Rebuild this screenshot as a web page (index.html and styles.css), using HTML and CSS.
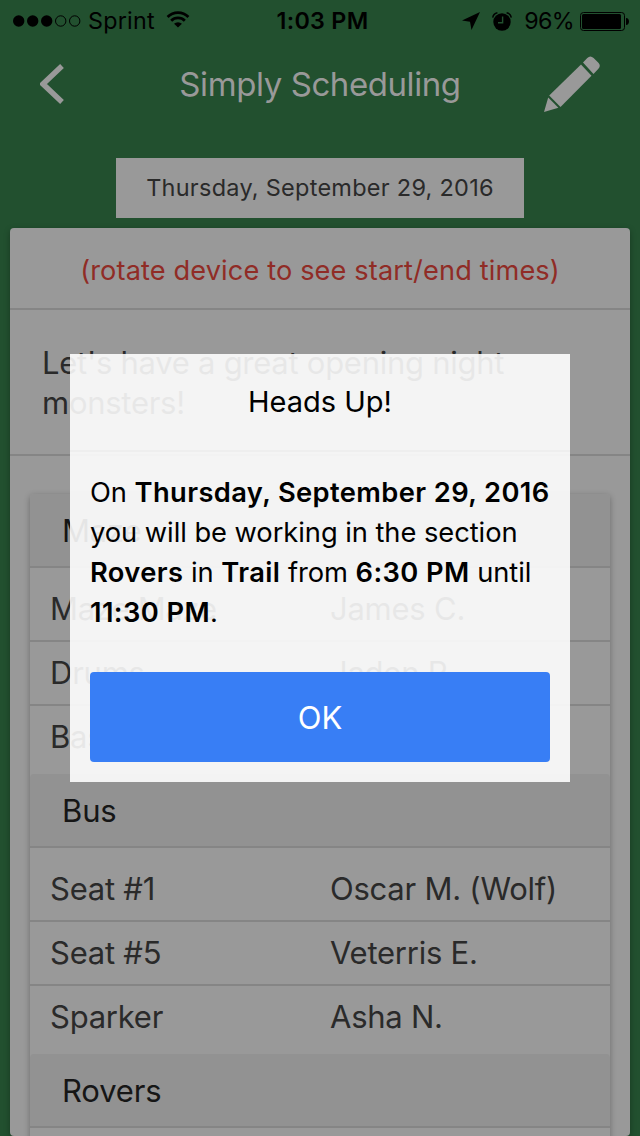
FILE: index.html
```html
<!DOCTYPE html>
<html lang="en">
<head>
<meta charset="utf-8">
<title>Simply Scheduling</title>
<link rel="stylesheet" href="styles.css">
</head>
<body>
<div class="screen">
  <div class="status">
    <div class="status-left">
      <svg class="signal" width="68" height="12" viewBox="0 0 68 12"><g><circle cx="5.7" cy="6" r="5.7"/><circle cx="19.7" cy="6" r="5.7"/><circle cx="33.7" cy="6" r="5.7"/></g><g fill="none" stroke="#000" stroke-width="1"><circle cx="47.7" cy="6" r="5.2"/><circle cx="61.7" cy="6" r="5.2"/></g></svg>
      <span class="carrier">Sprint</span>
      <svg class="wifi" width="24" height="19" viewBox="0 0 26 19"><g fill="none" stroke="#000" stroke-width="3"><path d="M1.7 6.8a16 16 0 0 1 22.6 0"/><path d="M5.6 10.9a10.5 10.5 0 0 1 14.8 0"/></g><path d="M13 18.3l-4.3-4.2a6.2 6.2 0 0 1 8.6 0z"/></svg>
    </div>
    <span class="clock">1:03 PM</span>
    <div class="status-right">
      <svg width="18" height="18" viewBox="0 0 18 18"><path d="M18 0L9.5 18 8 9.8 0 8.4z"/></svg>
      <svg class="alarm" width="20" height="19" viewBox="0 0 20 19"><circle cx="10" cy="10" r="8.7"/><path d="M.7 5.6A6 6 0 0 1 5.4.8M19.3 5.6A6 6 0 0 0 14.6.8" fill="none" stroke="#000" stroke-width="1.4"/><path d="M10.6 4.6v6.2H6" fill="none" stroke="#22502f" stroke-width="1.4"/></svg>
      <span class="percent">96%</span>
      <svg width="49" height="19" viewBox="0 0 49 19"><rect x=".5" y=".5" width="44" height="18" rx="3" fill="none" stroke="#000"/><rect x="2" y="2" width="39" height="15" rx="1.5"/><path d="M46 6c4 0 4 7 0 7z"/></svg>
    </div>
  </div>
  <header class="navbar">
    <svg class="back" width="24" height="40" viewBox="0 0 24 40"><path d="M22 2L3 20l19 18" fill="none" stroke="#999" stroke-width="5.4"/></svg>
    <h1 class="title">Simply Scheduling</h1>
    <svg class="pencil" width="56" height="56" viewBox="0 0 56 56" fill="#999"><path d="M39 6.5L43.3 2q3-3.2 6.3 0l4.8 4.8q2.8 3 0 6L49.5 18z"/><path d="M37 8.5l10.5 11.3L16.5 51 5.2 39.6z"/><path d="M4.2 41.6l10.2 10.2L0 56z"/></svg>
  </header>
  <div class="date">Thursday, September 29, 2016</div>
  <main class="card">
    <div class="hint">(rotate device to see start/end times)</div>
    <div class="note">Let's have a great opening night<br>monsters!</div>
    <div class="list-wrap">
      <div class="list">
        <h2 class="section">Maze</h2>
        <div class="row first"><span>Maze Maze</span><span>James C.</span></div>
        <div class="row"><span>Drums</span><span>Jaden R.</span></div>
        <div class="row last"><span>Bass</span><span></span></div>
        <h2 class="section">Bus</h2>
        <div class="row first"><span>Seat #1</span><span>Oscar M. (Wolf)</span></div>
        <div class="row"><span>Seat #5</span><span>Veterris E.</span></div>
        <div class="row last"><span>Sparker</span><span>Asha N.</span></div>
        <h2 class="section">Rovers</h2>
      </div>
    </div>
  </main>
  <div class="popup">
    <h3 class="popup-head">Heads Up!</h3>
    <div class="popup-body">
      <div>On <b>Thursday, September 29, 2016</b></div>
      <div>you will be working in the section</div>
      <div><b>Rovers</b> in <b>Trail</b> from <b>6:30 PM</b> until</div>
      <div><b>11:30 PM</b>.</div>
    </div>
    <button class="ok">OK</button>
  </div>
</div>
</body>
</html>
```
FILE: styles.css
```css
* { box-sizing: border-box; }
body { margin: 0; font-family: Inter, "Liberation Sans", sans-serif; }
h1, h2, h3 { margin: 0; font-weight: 400; }
svg { display: block; flex: none; }
.screen { position: relative; width: 640px; height: 1136px; overflow: hidden; background: #22502f; display: flex; flex-direction: column; }
.status { height: 40px; flex: none; display: grid; grid-template-columns: 1fr auto 1fr; align-items: center; padding: 2px 11px 0 13px; font-size: 23.3px; line-height: 38px; white-space: nowrap; }
.status-left, .status-right { display: flex; align-items: center; }
.status-right { justify-content: flex-end; }
.carrier { margin-left: 7px; letter-spacing: .25px; }
.wifi { margin-left: 11px; margin-top: -3px; }
.clock { font-weight: 600; letter-spacing: .3px; padding-left: 3px; }
.alarm { margin: 0 12px; }
.percent { margin-right: 6px; letter-spacing: -.7px; }
.navbar { height: 88px; flex: none; display: grid; grid-template-columns: 1fr auto 1fr; align-items: center; padding: 0 40px; }
.pencil { justify-self: end; }
.title { font-size: 33px; line-height: 40px; color: #999; letter-spacing: -.42px; }
.date { flex: none; width: 408px; height: 60px; margin: 30px auto 10px; background: #999; color: #2a2a2a; font-size: 23.5px; line-height: 60px; letter-spacing: .26px; text-align: center; white-space: nowrap; }
.card { flex: none; height: 908px; margin: 0 10px; background: #999; border-radius: 4px; box-shadow: 0 2px 6px rgba(0,0,0,.3); color: #2a2a2a; }
.hint { height: 82px; border-bottom: 2px solid #858585; line-height: 85px; font-size: 27.2px; letter-spacing: .12px; text-align: center; color: #902c26; white-space: nowrap; }
.note { height: 146px; border-bottom: 2px solid #858585; padding: 33px 32px; font-size: 31px; line-height: 40px; letter-spacing: -.27px; white-space: nowrap; }
.list-wrap { height: 680px; padding: 38px 20px 0; overflow: hidden; }
.list { height: 700px; border-radius: 4px; box-shadow: 0 2px 6px rgba(0,0,0,.3); }
.section { height: 74px; padding-left: 32px; background: #929292; border-bottom: 2px solid #858585; border-radius: 4px 4px 0 0; font-size: 31px; line-height: 74px; letter-spacing: -.15px; color: #161616; }
.row { display: grid; grid-template-columns: 280px 1fr; height: 64px; padding-left: 20px; border-bottom: 2px solid #858585; font-size: 31px; line-height: 62px; letter-spacing: -.24px; white-space: nowrap; }
.first { height: 74px; padding-top: 10px; }
.last { height: 68px; border-bottom: 0; }
.popup { position: absolute; left: 70px; top: 354px; width: 500px; height: 428px; background: rgba(255,255,255,.892); color: #000; }
.popup-head { height: 98px; border-bottom: 2px solid #eee; font-size: 29px; line-height: 96px; text-align: center; }
.popup-body { height: 220px; padding: 21px 20px 0; font-size: 27.3px; line-height: 40px; letter-spacing: -.05px; white-space: nowrap; }
.popup-body b { font-weight: 600; letter-spacing: .39px; }
.ok { display: block; width: 460px; height: 90px; margin: 0 20px; padding: 2px 0 0; border: 0; border-radius: 4px; background: #387ef5; color: #fff; font-family: inherit; font-size: 31px; line-height: 88px; }
```
